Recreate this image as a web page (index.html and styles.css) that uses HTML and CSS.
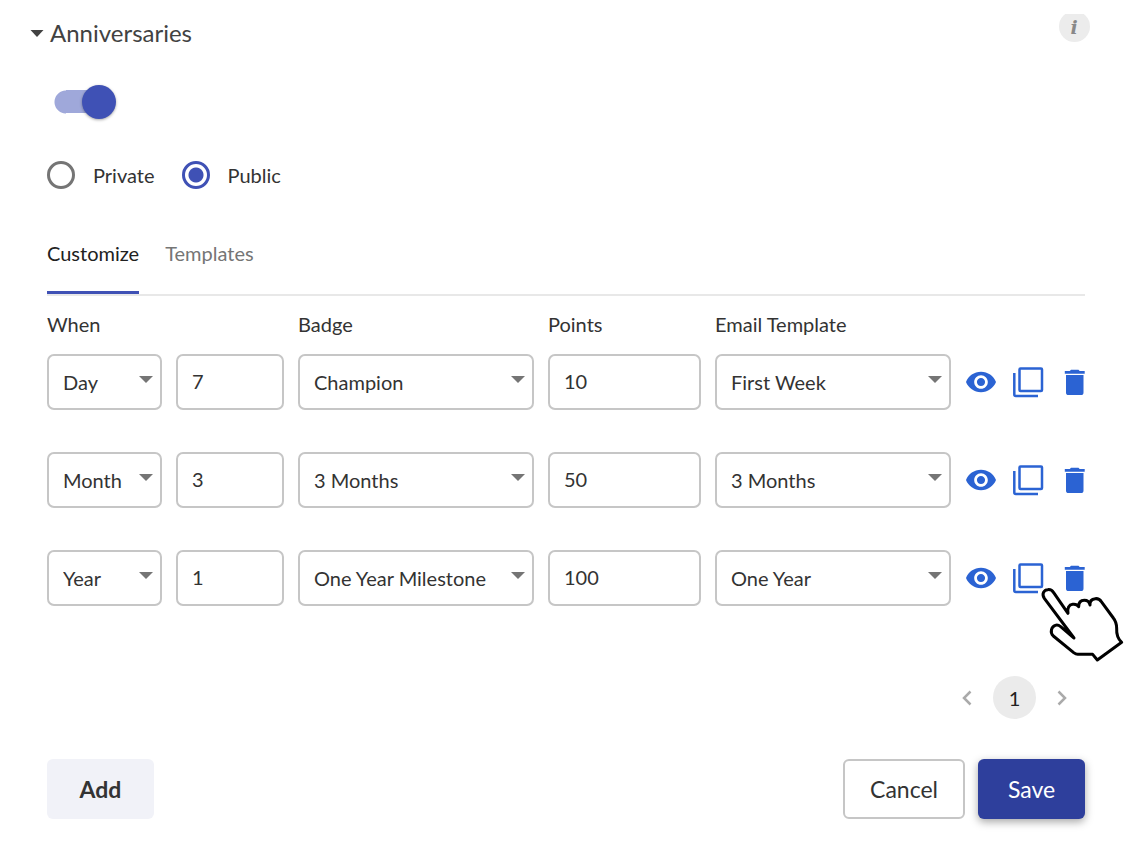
FILE: index.html
```html
<!DOCTYPE html>
<html lang="en">
<head>
  <meta charset="UTF-8">
  <meta name="viewport" content="width=device-width, initial-scale=1.0">
  <title>Anniversaries</title>
  <link rel="stylesheet" href="styles.css">
</head>
<body>
  <!-- shared icons -->
  <svg class="sprite" aria-hidden="true">
    <symbol id="eye" viewBox="1 4 22 16">
      <path d="M12 4.500C7 4.500 2.730 7.610 1 12c1.730 4.390 6 7.500 11 7.500s9.270-3.110 11-7.500c-1.730-4.390-6-7.500-11-7.500zM12 17c-2.760 0-5-2.240-5-5s2.240-5 5-5 5 2.240 5 5-2.240 5-5 5zm0-8c-1.660 0-3 1.340-3 3s1.340 3 3 3 3-1.340 3-3-1.340-3-3-3z" fill="currentColor"/>
    </symbol>
    <symbol id="copy" viewBox="0 0 31 31">
      <rect x="6.500" y="1.500" width="22.500" height="22.500" rx="1" fill="none" stroke="currentColor" stroke-width="2.500"/>
      <path d="M1.300 6v21.500a1.500 1.500 0 0 0 1.500 1.500H25" fill="none" stroke="currentColor" stroke-width="2.500"/>
    </symbol>
    <symbol id="trash" viewBox="0 0 24 26">
      <path d="M5 6h17.500v17.400a2.600 2.600 0 0 1-2.600 2.600H7.600A2.600 2.600 0 0 1 5 23.400zM3.800 2h5L10 .8h7.500L18.700 2h5v2.700H3.800z" fill="currentColor"/>
    </symbol>
  </svg>

  <main>
    <header class="head">
      <h1><button class="title" type="button" aria-expanded="true">
        <svg width="14" height="7" viewBox="0 0 14 7" aria-hidden="true"><path d="M0.500 0h13L7 7z" fill="currentColor"/></svg>
        Anniversaries
      </button></h1>
      <button class="info" type="button" aria-label="Info">
        <svg width="31" height="28" viewBox="0 0 31 28">
          <circle cx="15.500" cy="12.500" r="15.500" fill="#ececec"/>
          <text x="15" y="20" text-anchor="middle">i</text>
        </svg>
      </button>
    </header>

    <form class="panel">
      <input class="toggle" type="checkbox" role="switch" aria-label="Enable anniversaries" checked>

      <div class="radios">
        <label><input type="radio" name="visibility"> Private</label>
        <label><input type="radio" name="visibility" checked> Public</label>
      </div>

      <div class="tabs" role="tablist">
        <button type="button" role="tab" class="tab active" aria-selected="true">Customize</button>
        <button type="button" role="tab" class="tab" aria-selected="false">Templates</button>
      </div>

      <div class="row labels">
        <span class="when" id="l-when">When</span>
        <span id="l-badge">Badge</span>
        <span id="l-points">Points</span>
        <span id="l-email">Email Template</span>
      </div>

      <div class="rows">
        <div class="row">
          <select aria-labelledby="l-when"><option>Day</option><option>Month</option><option>Year</option></select>
          <input type="text" value="7" aria-labelledby="l-when">
          <select aria-labelledby="l-badge"><option>Champion</option></select>
          <input type="text" value="10" aria-labelledby="l-points">
          <select aria-labelledby="l-email"><option>First Week</option></select>
          <div class="actions">
            <button type="button" aria-label="Preview"><svg width="30" height="22"><use href="#eye"/></svg></button>
            <button type="button" aria-label="Duplicate"><svg width="31" height="31"><use href="#copy"/></svg></button>
            <button type="button" aria-label="Delete"><svg width="24" height="26"><use href="#trash"/></svg></button>
          </div>
        </div>

        <div class="row">
          <select aria-labelledby="l-when"><option>Day</option><option selected>Month</option><option>Year</option></select>
          <input type="text" value="3" aria-labelledby="l-when">
          <select aria-labelledby="l-badge"><option>3 Months</option></select>
          <input type="text" value="50" aria-labelledby="l-points">
          <select aria-labelledby="l-email"><option>3 Months</option></select>
          <div class="actions">
            <button type="button" aria-label="Preview"><svg width="30" height="22"><use href="#eye"/></svg></button>
            <button type="button" aria-label="Duplicate"><svg width="31" height="31"><use href="#copy"/></svg></button>
            <button type="button" aria-label="Delete"><svg width="24" height="26"><use href="#trash"/></svg></button>
          </div>
        </div>

        <div class="row">
          <select aria-labelledby="l-when"><option>Day</option><option>Month</option><option selected>Year</option></select>
          <input type="text" value="1" aria-labelledby="l-when">
          <select aria-labelledby="l-badge"><option>One Year Milestone</option></select>
          <input type="text" value="100" aria-labelledby="l-points">
          <select aria-labelledby="l-email"><option>One Year</option></select>
          <div class="actions">
            <button type="button" aria-label="Preview"><svg width="30" height="22"><use href="#eye"/></svg></button>
            <button type="button" aria-label="Duplicate"><svg width="31" height="31"><use href="#copy"/></svg></button>
            <button type="button" aria-label="Delete"><svg width="24" height="26"><use href="#trash"/></svg></button>
            <svg class="pointer" width="108" height="95" viewBox="0 0 324 285" aria-hidden="true">
              <path d="M132 189L43 70C34 56 42 45 53 44C61 43 67 46 71 53L114 115C111 99 117 89 128 88C137 87 143 90 146 95C146 82 153 76 163 76C172 76 178 81 180 90C179 78 186 72 196 71C205 70 210 74 214 80L250 129C257 138 260 148 260 160C259 178 262 190 275 202L202 255L188 238H143C139 238 135 236 131 233L70 183C59 172 64 155 76 151C82 149 87 151 92 155Z"/>
            </svg>
          </div>
        </div>
      </div>

      <nav class="pager" aria-label="Pages">
        <button type="button" aria-label="Previous page"><svg width="10" height="16" viewBox="0 0 10 16"><path d="M8.500 1.500L2 8l6.500 6.500"/></svg></button>
        <button type="button" class="page" aria-current="page">1</button>
        <button type="button" aria-label="Next page"><svg width="10" height="16" viewBox="0 0 10 16"><path d="M1.500 1.500L8 8l-6.500 6.500"/></svg></button>
      </nav>

      <div class="footer">
        <button type="button" class="btn add">Add</button>
        <button type="button" class="btn cancel">Cancel</button>
        <button type="submit" class="btn save">Save</button>
      </div>
    </form>
  </main>
</body>
</html>
```
FILE: styles.css
```css
* { box-sizing: border-box; }
body {
  margin: 0;
  background: #fff;
  color: #333;
  font: 20px/24px Lato, sans-serif;
}
button, input, select { font: inherit; color: inherit; }
button { border: none; background: none; padding: 0; cursor: pointer; }
svg { display: block; }
.sprite { display: none; }
main { padding: 14px 48px 32px 30px; }

.head { display: flex; justify-content: space-between; align-items: flex-start; }
h1 { margin: 0; font-size: 24px; font-weight: 400; line-height: 38px; }
.title { display: flex; align-items: center; gap: 6px; color: #424242; }
.info text {
  font: italic bold 19px 'DejaVu Serif', serif;
  fill: #888;
}
.panel { padding: 0 5px 0 17px; }

.toggle {
  appearance: none;
  display: flex; align-items: center; justify-content: flex-end;
  width: 62px; height: 34px;
  margin: 33px 0 0 7px;
  background:
    radial-gradient(circle at 12px 17px, #9fa8da 11px, transparent 12px) no-repeat 0 0 / 12px 34px,
    linear-gradient(#9fa8da, #9fa8da) no-repeat 12px 5px / 32px 23px;
}
.toggle::before {
  content: '';
  width: 34px; height: 34px;
  border-radius: 50%;
  background: #3f51b5;
  box-shadow: 0 1px 3px rgba(0,0,0,0.35);
}
.toggle:not(:checked) { justify-content: flex-start; }

.radios { display: flex; gap: 27px; margin-top: 42px; }
.radios label { display: flex; align-items: center; gap: 18px; }
.radios input {
  appearance: none;
  width: 28px; height: 28px;
  margin: 0;
  border: 3px solid #757575;
  border-radius: 50%;
}
.radios input:checked {
  border-color: #3f51b5;
  background: radial-gradient(circle, #3f51b5 7px, transparent 8px);
}

.tabs {
  display: flex; gap: 26px;
  margin-top: 52px;
  border-bottom: 2px solid #e8e8e8;
}
.tab {
  padding-bottom: 26px;
  border-bottom: 3px solid transparent;
  color: #757575;
}
.tab.active { color: #212121; border-color: #3f51b5; }

.row {
  display: grid;
  grid-template-columns: 115fr 108fr 236fr 153fr 236fr 120px;
  gap: 14px;
}
.labels { margin: 16px 0 18px; }
.when { grid-column: span 2; }
.rows { display: grid; gap: 42px; }
.row select, .row input {
  appearance: none;
  width: 100%; min-width: 0; height: 56px;
  padding: 0 14px 2px;
  border: 2px solid #c6c6c6;
  border-radius: 7px;
  background: #fff;
}
.row select {
  padding-top: 2px;
  background: #fff url("data:image/svg+xml,%3Csvg xmlns='http://www.w3.org/2000/svg' width='14' height='7'%3E%3Cpath d='M0 0h14L7 7z' fill='%23757575'/%3E%3C/svg%3E") no-repeat right 7px top 20px;
}
.actions {
  position: relative;
  display: flex; align-items: center; justify-content: flex-end;
  gap: 17px;
  color: #2b63d3;
}
.pointer { position: absolute; left: 65px; top: 25px; pointer-events: none; }
.pointer path { fill: #fff; stroke: #000; stroke-width: 9; stroke-linejoin: round; }

.pager {
  display: flex; justify-content: flex-end; gap: 10px;
  margin: 70px 7px 40px 0;
}
.pager button { width: 32px; display: grid; place-items: center; }
.pager path { fill: none; stroke: #aaa; stroke-width: 2.5; }
.pager .page {
  width: 43px; height: 43px;
  border-radius: 50%;
  background: #ebebeb;
  color: #212121;
}

.footer { display: flex; gap: 13px; }
.btn {
  height: 60px;
  min-width: 107px;
  padding: 0 25px;
  border-radius: 6px;
  font-size: 23px;
}
.add { margin-right: auto; background: #f1f2f8; font-weight: 700; }
.cancel { border: 2px solid #c6c6c6; }
.save {
  background: #2e3f9c;
  color: #fff;
  box-shadow: 0 3px 8px rgba(0,0,0,0.35);
}
```
